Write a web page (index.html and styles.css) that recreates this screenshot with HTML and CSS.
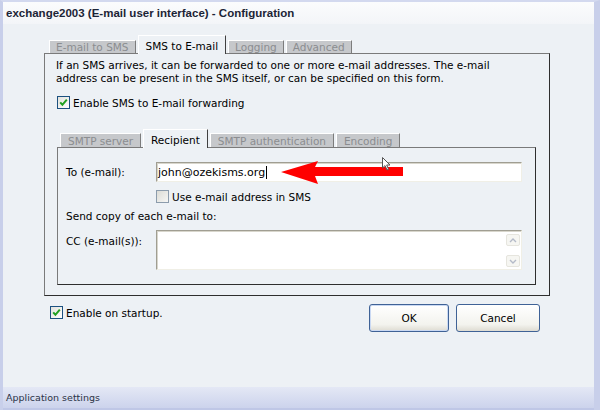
FILE: index.html
```html
<!DOCTYPE html>
<html lang="en">
<head>
  <meta charset="UTF-8">
  <title>Configuration</title>
  <link rel="stylesheet" href="styles.css">
</head>
<body>
  <div class="window">
    <div class="titlebar">exchange2003 (E-mail user interface) - Configuration</div>

    <div class="content">
      <div class="tabs outer-tabs">
        <span class="tab">E-mail to SMS</span>
        <span class="tab active">SMS to E-mail</span>
        <span class="tab">Logging</span>
        <span class="tab">Advanced</span>
      </div>
      <div class="panel outer">
        <p class="intro">If an SMS arrives, it can be forwarded to one or more e-mail addresses. The e-mail<br>address can be present in the SMS itself, or can be specified on this form.</p>
        <div class="check">
          <span class="box checked"><svg width="11" height="11" viewBox="0 0 11 11"><path d="M2.2 5.4 L4.4 7.8 L8.8 2.6" fill="none" stroke="#21a121" stroke-width="2"/></svg></span>
          Enable SMS to E-mail forwarding
        </div>

        <div class="tabs inner-tabs">
          <span class="tab">SMTP server</span>
          <span class="tab active">Recipient</span>
          <span class="tab">SMTP authentication</span>
          <span class="tab">Encoding</span>
        </div>
        <div class="panel inner">
          <div class="row">
            <span class="label">To (e-mail):</span>
            <div class="field">
              <div class="textbox">john@ozekisms.org<span class="caret"></span></div>
              <svg class="arrow" width="124" height="25" viewBox="0 0 124 25">
                <polygon points="1,12 38,1 35,7 123,7 123,16 35,16 38,24" fill="#f00"/>
              </svg>
              <svg class="pointer" width="10" height="14" viewBox="0 0 10 14">
                <path d="M0.5 0.5 L0.5 11 L3 8.6 L5 13 L6.6 12.3 L4.7 8 L8 8 Z" fill="#fff" stroke="#555" stroke-width="1"/>
              </svg>
            </div>
          </div>
          <div class="check indent">
            <span class="box"></span>
            Use e-mail address in SMS
          </div>
          <div class="note">Send copy of each e-mail to:</div>
          <div class="row top">
            <span class="label cc">CC (e-mail(s)):</span>
            <div class="textarea">
              <div class="scroll">
                <span class="scroll-btn"><svg width="8" height="5" viewBox="0 0 8 5"><path d="M1 4 L4 1 L7 4" fill="none" stroke="#b4bac8" stroke-width="1.4"/></svg></span>
                <span class="scroll-btn"><svg width="8" height="5" viewBox="0 0 8 5"><path d="M1 1 L4 4 L7 1" fill="none" stroke="#b4bac8" stroke-width="1.4"/></svg></span>
              </div>
            </div>
          </div>
        </div>
      </div>

      <div class="footer">
        <div class="check startup">
          <span class="box checked"><svg width="11" height="11" viewBox="0 0 11 11"><path d="M2.2 5.4 L4.4 7.8 L8.8 2.6" fill="none" stroke="#21a121" stroke-width="2"/></svg></span>
          Enable on startup.
        </div>
        <div class="buttons">
          <button type="button" class="btn default">OK</button>
          <button type="button" class="btn cancel">Cancel</button>
        </div>
      </div>
    </div>

    <div class="statusbar">Application settings</div>
  </div>
</body>
</html>
```

FILE: styles.css
```css
body {
  margin: 0;
  font-family: "DejaVu Sans", sans-serif;
  font-size: 10.5px;
  color: #000;
}

.window {
  width: 600px;
  height: 410px;
  box-sizing: border-box;
  display: flex;
  flex-direction: column;
  background: #edf1f5;
  border-top: 2px solid #d3d9ef;
  border-left: 3px solid #c8cfea;
  border-right: 6px solid #c8cfea;
}

.titlebar {
  height: 22px;
  padding-left: 3px;
  display: flex;
  align-items: center;
  font: bold 11.5px "Liberation Sans", Arial, sans-serif;
  color: #1c2436;
  background: linear-gradient(#fbfcfd, #f3f5f8);
}

.content {
  flex: 1;
  padding: 11px 44px 0 41px;
}

/* tabs */
.tabs {
  display: flex;
  align-items: flex-end;
  gap: 2px;
}

.outer-tabs {
  padding-left: 5px;
}

.inner-tabs {
  padding-left: 3px;
  margin-top: 20px;
}

.tab {
  height: 12px;
  line-height: 13px;
  padding: 0 6px;
  background: #c6c8cb;
  color: #8b8d90;
  border-top: 1px solid #fff;
  border-left: 1px solid #fff;
  border-right: 1px solid #7c7c7c;
  white-space: nowrap;
}

.inner-tabs .tab {
  height: 13px;
  line-height: 14px;
  padding: 0 7px;
}

.tab.active {
  position: relative;
  z-index: 1;
  height: 14px;
  padding: 4px 7px 0;
  margin-bottom: -1px;
  background: #edf1f5;
  color: #000;
  border-right-color: #404040;
}

.inner-tabs .tab.active {
  height: 15px;
  padding: 3px 7px 0;
}

/* panels */
.panel {
  box-sizing: border-box;
  border: 1px solid;
  border-color: #7a7a7a #2e2e2e #2e2e2e #7a7a7a;
}

.outer {
  height: 243px;
  padding: 5px 13px 0 12px;
}

.intro {
  margin: 0 0 0 -1px;
  line-height: 13px;
}

.check {
  display: flex;
  align-items: center;
  gap: 3px;
  height: 13px;
  margin-top: 11px;
}

.box {
  box-sizing: border-box;
  width: 13px;
  height: 13px;
  border: 1px solid #1c5180;
  background: linear-gradient(135deg, #e2e2dc, #fff);
  display: flex;
}

.box svg {
  display: block;
}

.inner {
  height: 138px;
  padding: 14px 13px 0 8px;
}

.row {
  display: flex;
  align-items: center;
}

.row.top {
  align-items: flex-start;
  margin-top: 7px;
}

.label {
  width: 90px;
}

.label.cc {
  padding-top: 5px;
}

.field {
  position: relative;
  flex: 1;
}

.textbox {
  box-sizing: border-box;
  height: 20px;
  padding-left: 1px;
  display: flex;
  align-items: center;
  background: #fff;
  border: 1px solid;
  border-color: #a09e92 #f0efe6 #f0efe6 #a09e92;
  box-shadow: inset 1px 1px 0 #d8d6cc;
  font-size: 11px;
}

.caret {
  width: 1px;
  height: 13px;
  background: #000;
  margin-left: 1px;
}

.arrow {
  position: absolute;
  left: 124px;
  top: -2px;
}

.pointer {
  position: absolute;
  left: 226px;
  top: -5px;
}

.check.indent {
  margin: 8px 0 0 90px;
}

.check.indent .box {
  border-color: #8c9cac;
  background: linear-gradient(135deg, #dcdcd6, #f6f6f4);
}

.note {
  margin-top: 7px;
  line-height: 13px;
}

.textarea {
  box-sizing: border-box;
  flex: 1;
  height: 40px;
  display: flex;
  justify-content: flex-end;
  padding: 3px 1px 2px 0;
  background: #fff;
  border: 1px solid;
  border-color: #a09e92 #f0efe6 #f0efe6 #a09e92;
  box-shadow: inset 1px 1px 0 #d8d6cc;
}

.scroll {
  width: 14px;
  display: flex;
  flex-direction: column;
  justify-content: space-between;
}

.scroll-btn {
  box-sizing: border-box;
  height: 12px;
  border: 1px solid #e6e5de;
  border-radius: 2px;
  background: #f6f6f2;
  display: flex;
  align-items: center;
  justify-content: center;
}

/* footer */
.footer {
  display: flex;
  justify-content: space-between;
  align-items: flex-start;
  padding: 8px 10px 0 6px;
}

.check.startup {
  margin-top: 2px;
}

.buttons {
  display: flex;
  gap: 7px;
}

.btn {
  height: 28px;
  font-family: "DejaVu Sans", sans-serif;
  font-size: 10.5px;
  color: #000;
  border: 1px solid #3f6296;
  border-radius: 3px;
  background: linear-gradient(#ffffff, #f3f3ee 75%, #dedcd2);
  padding: 0;
}

.btn.default {
  width: 80px;
  box-shadow: inset 0 0 0 1px #cad9f3;
}

.btn.cancel {
  width: 84px;
}

.statusbar {
  height: 23px;
  box-sizing: border-box;
  padding-left: 3px;
  display: flex;
  align-items: center;
  font-size: 9.5px;
  color: #2b3346;
  background: linear-gradient(#e4e8f5, #ccd3ec);
  border-bottom: 2px solid #bfc7e6;
}
```
